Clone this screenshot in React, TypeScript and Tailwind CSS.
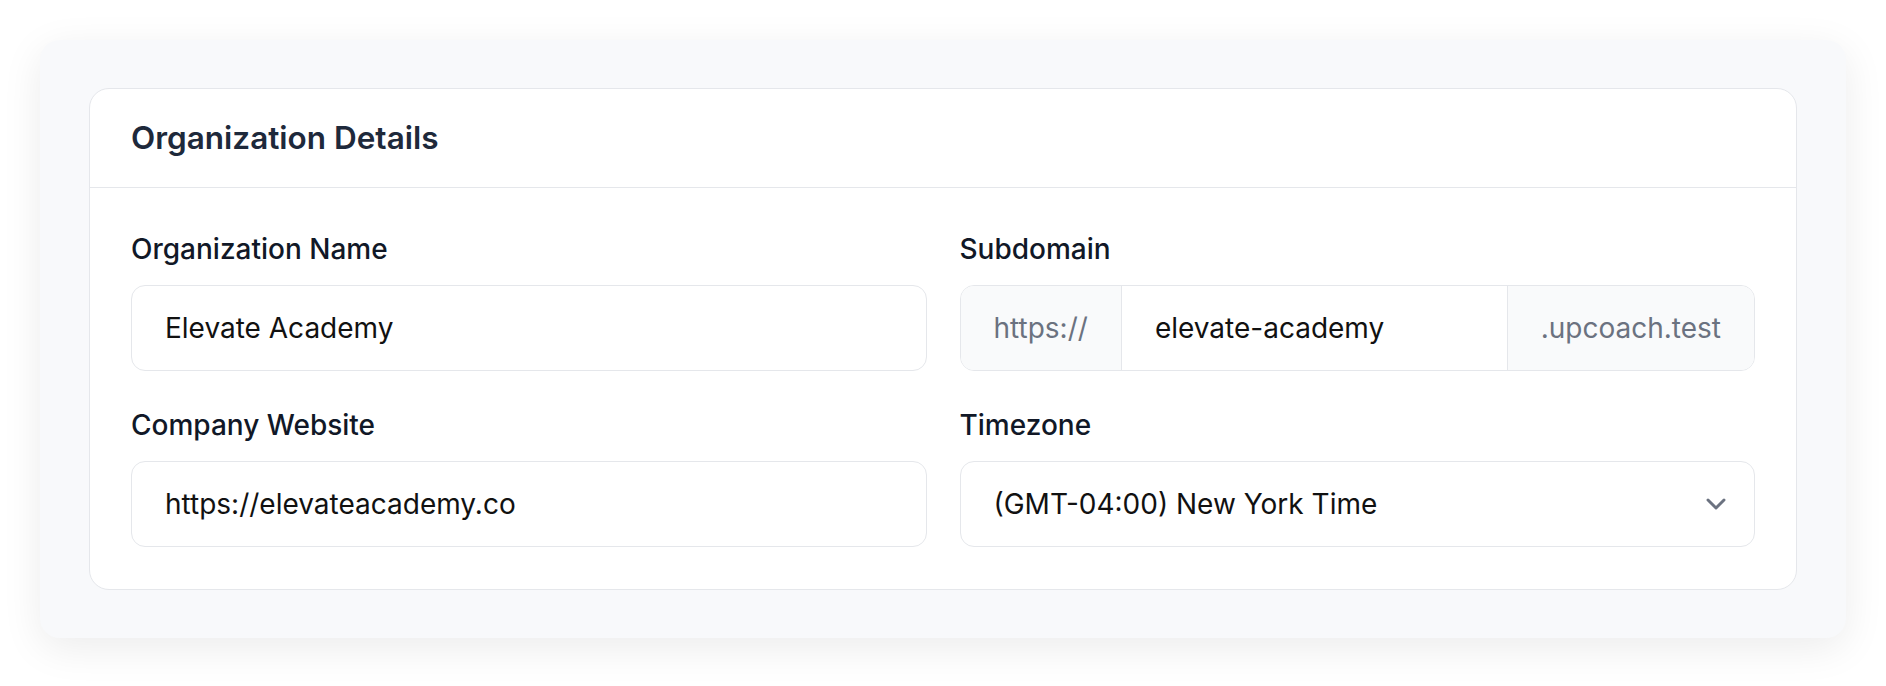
import { ChevronDown } from "lucide-react";

function Label({ children }: { children: string }) {
  return <label className="mb-[16px] block text-[28px] leading-[40px] font-medium text-[#111827]">{children}</label>;
}

export default function App() {
  return (
    <div className="min-h-screen bg-white p-10 font-['Inter',sans-serif]">
      <div className="rounded-[20px] bg-[#f8f9fb] px-[49px] py-[48px] shadow-[0_10px_40px_rgba(0,0,0,0.08)]">
        <div className="rounded-[20px] border border-[#e5e7eb] bg-white">
          <div className="flex h-[99px] items-center border-b border-[#e5e7eb] px-[41px]">
            <h2 className="text-[31.5px] font-semibold text-[#1e293b]">Organization Details</h2>
          </div>
          <div className="grid grid-cols-2 gap-x-[33px] gap-y-[34px] px-[41px] pt-[41px] pb-[42px]">
            <div>
              <Label>Organization Name</Label>
              <div className="flex h-[86px] items-center rounded-[14px] border border-[#e5e7eb] px-[33px] text-[28px] text-[#111]">
                Elevate Academy
              </div>
            </div>
            <div>
              <Label>Subdomain</Label>
              <div className="flex h-[86px] overflow-hidden rounded-[14px] border border-[#e5e7eb] text-[28px]">
                <div className="flex items-center border-r border-[#e5e7eb] bg-[#f9fafb] px-[33px] text-[#6b7280]">https://</div>
                <div className="flex flex-1 items-center px-[33px] text-[#111]">elevate-academy</div>
                <div className="flex items-center border-l border-[#e5e7eb] bg-[#f9fafb] px-[33px] text-[#6b7280]">.upcoach.test</div>
              </div>
            </div>
            <div>
              <Label>Company Website</Label>
              <div className="flex h-[86px] items-center rounded-[14px] border border-[#e5e7eb] px-[33px] text-[28px] text-[#111]">
                https://elevateacademy.co
              </div>
            </div>
            <div>
              <Label>Timezone</Label>
              <div className="flex h-[86px] items-center justify-between rounded-[14px] border border-[#e5e7eb] pl-[33px] pr-[22px] text-[28px] text-[#111]">
                <span>(GMT-04:00) New York Time</span>
                <ChevronDown size={32} strokeWidth={2.2} className="text-[#6b7280]" />
              </div>
            </div>
          </div>
        </div>
      </div>
    </div>
  );
}
